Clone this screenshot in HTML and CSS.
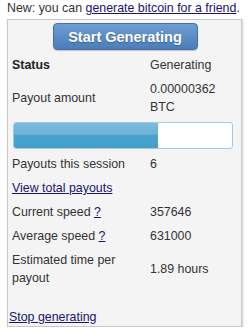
FILE: index.html
```html
<!DOCTYPE html>
<html lang="en">
<head>
    <meta charset="UTF-8">
    <meta name="viewport" content="width=device-width, initial-scale=1.0">
    <title>Bitcoin Generator</title>
    <link rel="stylesheet" href="styles.css">
</head>
<body>
    <div class="notice">New: you can <a href="#">generate bitcoin for a friend</a>.</div>

    <div class="panel">
        <div class="btn-row">
            <button class="btn">Start Generating</button>
        </div>

        <table class="stats">
            <tr>
                <td class="label"><b>Status</b></td>
                <td>Generating</td>
            </tr>
            <tr>
                <td class="label">Payout amount</td>
                <td>0.00000362 BTC</td>
            </tr>
            <tr>
                <td colspan="2">
                    <div class="progress">
                        <div class="progress-fill" style="width: 66%;"></div>
                    </div>
                </td>
            </tr>
            <tr>
                <td class="label">Payouts this session</td>
                <td>6</td>
            </tr>
            <tr>
                <td colspan="2"><a href="#">View total payouts</a></td>
            </tr>
            <tr>
                <td class="label">Current speed <a href="#">?</a></td>
                <td>357646</td>
            </tr>
            <tr>
                <td class="label">Average speed <a href="#">?</a></td>
                <td>631000</td>
            </tr>
            <tr>
                <td class="label">Estimated time per payout</td>
                <td>1.89 hours</td>
            </tr>
        </table>

        <div class="stop"><a href="#">Stop generating</a></div>
    </div>
</body>
</html>
```

FILE: styles.css
```css
* { margin: 0; padding: 0; box-sizing: border-box; }
body {
    font-family: Arial, 'Liberation Sans', sans-serif;
    font-size: 12.4px;
    line-height: 18px;
    color: #333;
    background: #fff;
    padding: 0 7px;
}
a { color: #1a1470; }
.notice { line-height: 16px; white-space: nowrap; }
.panel {
    margin-top: 3px;
    width: 235px;
    background: #f4f4f4;
    border: 1px solid #c8c8c8;
    box-shadow: 1px 1px 2px rgba(0, 0, 0, 0.2);
    padding: 0 1px;
}
.btn-row {
    display: flex;
    justify-content: center;
    padding: 3px 0 3px 1px;
}
.btn {
    width: 145px;
    height: 27px;
    font-family: Arial, 'Liberation Sans', sans-serif;
    font-size: 14.5px;
    font-weight: bold;
    color: #fff;
    text-shadow: 0 1px 1px rgba(0, 0, 0, 0.3);
    background: linear-gradient(#6d9dd2, #4b7db9);
    border: 1px solid #4a70a3;
    border-radius: 4px;
    box-shadow: 0 1px 1px rgba(0, 0, 0, 0.2);
    cursor: pointer;
}
.stats { width: 100%; border-collapse: collapse; }
.stats td { padding: 3px; vertical-align: middle; }
.stats .label { width: 138px; }
.stats b { color: #222; }
.progress {
    margin: 0 4px 0 1px;
    height: 27px;
    background: #fff;
    border: 1px solid #9fcbe6;
    border-radius: 3px;
    overflow: hidden;
}
.progress-fill {
    height: 100%;
    background: linear-gradient(#7bbadb 0%, #6fb2d6 45%, #4aa2cc 50%, #42a0cb 100%);
}
.stop { padding-top: 18px; }
```
